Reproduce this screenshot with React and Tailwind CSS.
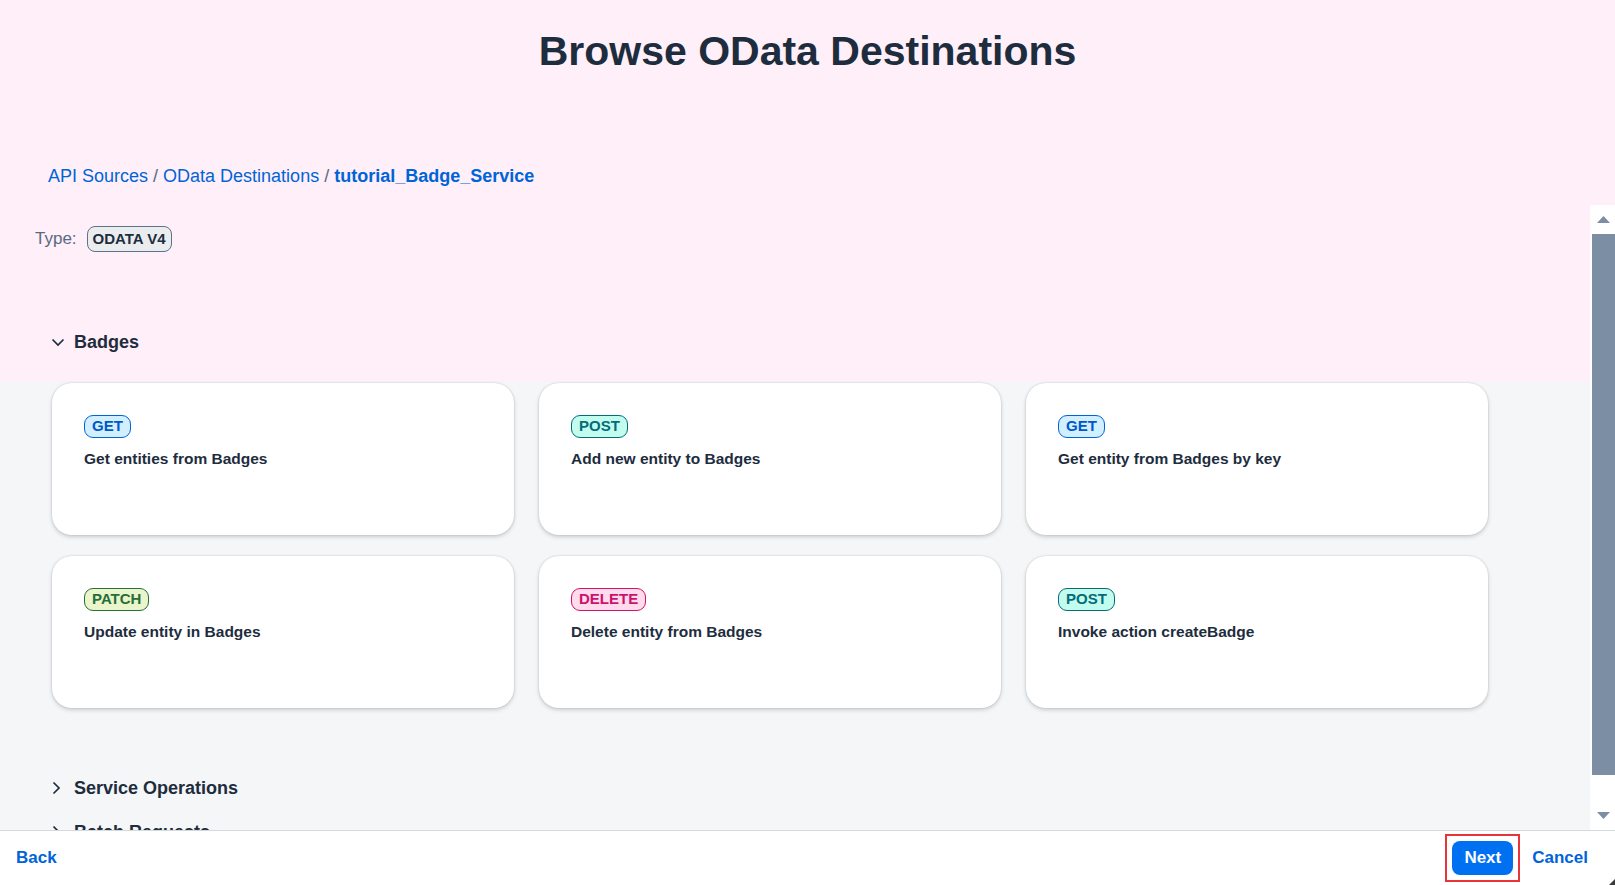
const ENDPOINTS = [
  { method: 'GET', title: 'Get entities from Badges' },
  { method: 'POST', title: 'Add new entity to Badges' },
  { method: 'GET', title: 'Get entity from Badges by key' },
  { method: 'PATCH', title: 'Update entity in Badges' },
  { method: 'DELETE', title: 'Delete entity from Badges' },
  { method: 'POST', title: 'Invoke action createBadge' },
];

const METHOD_STYLES = {
  GET: 'bg-[#d1efff] border-[#0064d9] text-[#0057c8]',
  POST: 'bg-[#c2fcee] border-[#046c7a] text-[#046c7a]',
  PATCH: 'bg-[#ebf5cb] border-[#256f3a] text-[#256f3a]',
  DELETE: 'bg-[#ffdbec] border-[#d0136f] text-[#cc1170]',
};

export default function App() {
  return (
    <div className="h-[885px] w-full flex flex-col overflow-hidden bg-[#f5f6f7] text-[#1d2d3e] font-['Liberation_Sans',Arial,sans-serif]">
      <header className="h-[205px] shrink-0 bg-[#ffeff8]">
        <h1 className="pt-[29px] text-center text-[41px] leading-[44px] font-bold text-[#1d2d3e]">
          Browse OData Destinations
        </h1>
        <nav className="mt-[91px] pl-[48px] text-[18px] leading-[24px] text-[#0064d9]">
          <span>API Sources</span>
          <span className="text-[#556b82]"> / </span>
          <span>OData Destinations</span>
          <span className="text-[#556b82]"> / </span>
          <span className="font-bold">tutorial_Badge_Service</span>
        </nav>
      </header>

      <div className="flex flex-1 min-h-0">
        <main className="flex-1 overflow-hidden">
          <section className="bg-[#ffeff8] pt-[21px] pb-[28px]">
            <div className="flex items-center pl-[35px] gap-[10px]">
              <span className="text-[17px] text-[#556b82]">Type:</span>
              <span className="h-[26px] px-[5px] flex items-center rounded-[8px] border border-[#5b738b] bg-[#eaecee] text-[15px] font-bold text-[#1d2d3e]">
                ODATA V4
              </span>
            </div>
            <SectionHeader title="Badges" open className="mt-[78px]" />
          </section>

          <div className="pl-[52px] pt-[1px] grid grid-cols-[repeat(3,462px)] gap-x-[25px] gap-y-[21px]">
            {ENDPOINTS.map((ep, i) => (
              <EndpointCard key={i} {...ep} />
            ))}
          </div>

          <SectionHeader title="Service Operations" className="mt-[68px]" />
          <SectionHeader title="Batch Requests" className="mt-[20px]" />
        </main>

        <Scrollbar />
      </div>

      <footer className="relative h-[55px] shrink-0 bg-white border-t border-[#d5dadd] flex items-center justify-between pl-[16px] pr-[27px]">
        <button className="text-[17px] font-bold text-[#0064d9]">Back</button>
        <div className="flex items-center gap-[12px]">
          <div className="border-2 border-[#e8353a] p-[5px]">
            <button className="h-[34px] px-[12px] rounded-[8px] bg-[#0070f2] text-white text-[17px] font-bold">
              Next
            </button>
          </div>
          <button className="text-[17px] font-bold text-[#0064d9]">Cancel</button>
        </div>
        <svg className="absolute right-0 bottom-0" width="6" height="6" viewBox="0 0 6 6">
          <polygon points="6,0 6,6 0,6" fill="#3a3a3a" />
        </svg>
      </footer>
    </div>
  );
}

function SectionHeader({ title, open, className = '' }) {
  return (
    <div className={`flex items-center h-[24px] ${className}`}>
      <div className="w-[74px] flex justify-end pr-[8px]">
        {open ? (
          <svg width="14" height="9" viewBox="0 0 14 9" className="mr-[1px]">
            <polyline points="1.5,1.5 7,7 12.5,1.5" fill="none" stroke="#1d2d3e" strokeWidth="1.7" />
          </svg>
        ) : (
          <svg width="9" height="14" viewBox="0 0 9 14" className="mr-[5px]">
            <polyline points="1.5,1.5 7,7 1.5,12.5" fill="none" stroke="#1d2d3e" strokeWidth="1.7" />
          </svg>
        )}
      </div>
      <h2 className="text-[18px] leading-[24px] font-bold text-[#1d2d3e]">{title}</h2>
    </div>
  );
}

function EndpointCard({ method, title }) {
  return (
    <div className="h-[152px] rounded-[20px] bg-white pl-[32px] pt-[31px] shadow-[0_0_2px_rgba(34,53,72,0.2),0_2px_4px_rgba(34,53,72,0.2)]">
      <span className={`inline-flex items-center h-[23px] px-[7px] rounded-[9px] border text-[15px] font-bold ${METHOD_STYLES[method]}`}>
        {method}
      </span>
      <p className="mt-[11px] text-[15.5px] leading-[20px] font-bold text-[#1d2d3e]">{title}</p>
    </div>
  );
}

function Scrollbar() {
  return (
    <div className="w-[25px] shrink-0 bg-white flex flex-col">
      <div className="h-[29px] flex items-center justify-center pl-[2px]">
        <svg width="13" height="7" viewBox="0 0 13 7">
          <polygon points="6.5,0 13,7 0,7" fill="#7b8ea3" />
        </svg>
      </div>
      <div className="ml-[2px] h-[541px] bg-[#7b8ea3]" />
      <div className="flex-1" />
      <div className="h-[29px] flex items-center justify-center pl-[2px]">
        <svg width="13" height="7" viewBox="0 0 13 7">
          <polygon points="0,0 13,0 6.5,7" fill="#7b8ea3" />
        </svg>
      </div>
    </div>
  );
}
